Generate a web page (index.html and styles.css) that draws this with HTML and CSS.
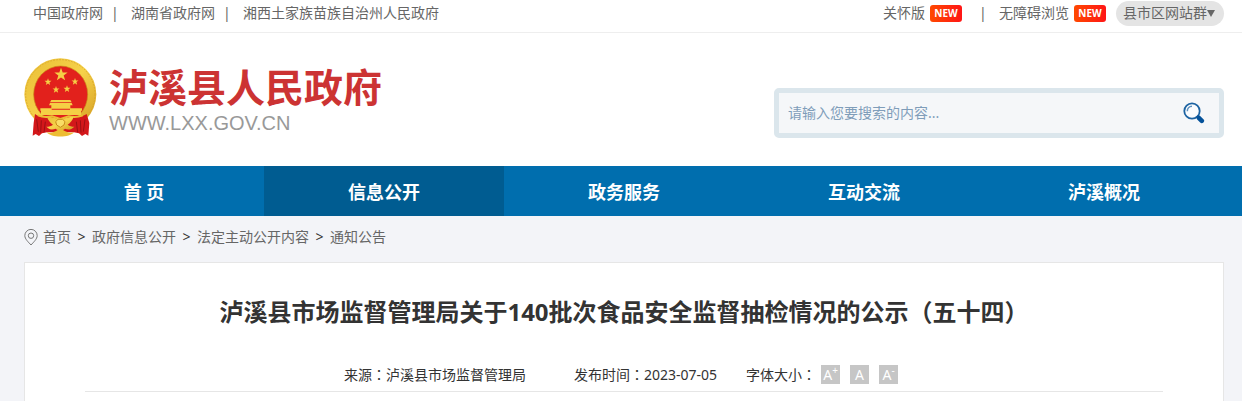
FILE: index.html
```
<!DOCTYPE html>
<html lang="zh-CN">
<head>
    <meta charset="UTF-8">
    <title>泸溪县市场监督管理局关于140批次食品安全监督抽检情况的公示（五十四）</title>
    <link rel="stylesheet" href="styles.css">
</head>
<body>
    <!-- 顶部链接 -->
    <div class="top">
        <div class="wrap top-inner">
            <div class="top-left">
                <a href="#">中国政府网</a>
                <span class="line">|</span>
                <a href="#">湖南省政府网</a>
                <span class="line">|</span>
                <a href="#">湘西土家族苗族自治州人民政府</a>
            </div>
            <div class="top-right">
                <a href="#">关怀版</a>
                <span class="new">NEW</span>
                <span class="line">|</span>
                <a href="#">无障碍浏览</a>
                <span class="new">NEW</span>
                <button type="button" class="sites">县市区网站群<svg width="8" height="7" viewBox="0 0 8 7"><path d="M0 0h8L4 7z" fill="#666"/></svg></button>
            </div>
        </div>
    </div>
    <!-- logo和搜索 -->
    <div class="wrap header">
        <a href="#" class="logo">
            <svg class="emblem" viewBox="28 22 219 237">
                <defs>
                    <linearGradient id="gold" x1="0" y1="0" x2="1" y2="1">
                        <stop offset="0" stop-color="#e9bd35"/>
                        <stop offset="0.5" stop-color="#f6d24a"/>
                        <stop offset="1" stop-color="#d29a20"/>
                    </linearGradient>
                    <polygon id="star" points="0,-10 2.4,-3.2 9.5,-3.1 3.8,1.2 5.9,8.1 0,4 -5.9,8.1 -3.8,1.2 -9.5,-3.1 -2.4,-3.2"/>
                </defs>
                <ellipse cx="137" cy="131" rx="108" ry="108" fill="url(#gold)"/>
                <ellipse cx="137" cy="131" rx="104" ry="104" fill="none" stroke="#d29c25" stroke-width="2" stroke-dasharray="5 4"/>
                <ellipse cx="138" cy="131" rx="81" ry="85" fill="#e2211c" stroke="#c98b1a" stroke-width="2"/>
                <g fill="#f5cf45">
                    <use href="#star" transform="translate(139 72) scale(2.1)"/>
                    <use href="#star" transform="translate(100 94) scale(1.1)"/>
                    <use href="#star" transform="translate(181 93) scale(1.1)"/>
                    <use href="#star" transform="translate(124 117) scale(1.1)"/>
                    <use href="#star" transform="translate(157 115) scale(1.1)"/>
                    <path d="M110 148h57l4 7h-65zM106 157h65l3 7h-71zM110 164h57v10h-57zM77 173h34v4h55v-4h36v7h-3v13H79v-13h-2z"/>
                </g>
                <!-- 红绸 -->
                <path d="M61 190c8 7 20 9 39 10h74c19-1 31-3 42-10l8 27-3 38-9-5-10 6-9-8-15-3H97l-15 3-9 8-10-6-9 5 3-38z" fill="#d3171a"/>
                <path d="M66 206l5 37M80 209l-2 37M92 213l-4 32M211 206l-5 37M197 209l2 37M185 213l4 32" stroke="#9c1013" stroke-width="3"/>
                <path d="M70 194c14 6 29 6 42 3l25 8 25-8c13 3 28 3 42-3" fill="none" stroke="#edbd33" stroke-width="6"/>
                <path d="M97 198c14 0 26 6 40 6s26-6 40-6c-3 10-10 18-18 24 6 4 12 6 20 6-10 10-20 10-28 6-6 7-22 7-28 0-8 4-18 4-28-6 8 0 14-2 20-6-8-6-15-14-18-24z" fill="url(#gold)"/>
                <path d="M123 213l7-7h14l7 7-3 10-11 7-11-7z" fill="#f9dd65" stroke="#c98b1a" stroke-width="3"/>
                <path d="M96 245c14 4 25-2 33-7h16c8 5 19 11 33 7-12 17-70 17-82 0z" fill="#edbd33"/>
            </svg>
            <span class="logo-text">
                <span class="logo-name">泸溪县人民政府</span>
                <span class="logo-url">WWW.LXX.GOV.CN</span>
            </span>
        </a>
        <form class="search">
            <input type="text" aria-label="搜索" placeholder="请输入您要搜索的内容...">
            <button type="button" aria-label="搜索">
                <svg width="22" height="22" viewBox="0 0 22 22">
                    <circle cx="9" cy="9" r="7.7" fill="#fafcfe" stroke="#1c63a2" stroke-width="1.8"/>
                    <path d="M4.3 9.3A5 5 0 0 1 9 4.2" fill="none" stroke="#5d91bf" stroke-width="1.5"/>
                    <path d="M14 14l1.8 1.8" stroke="#1c63a2" stroke-width="2"/>
                    <path d="M15.8 15.8l3 3" stroke="#04529a" stroke-width="4.6" stroke-linecap="round"/>
                </svg>
            </button>
        </form>
    </div>
    <!-- 导航 -->
    <nav class="nav">
        <div class="wrap nav-inner">
            <a href="#">首 页</a>
            <a href="#" class="on">信息公开</a>
            <a href="#">政务服务</a>
            <a href="#">互动交流</a>
            <a href="#">泸溪概况</a>
        </div>
    </nav>
    <!-- 正文 -->
    <div class="wrap main">
        <div class="position">
            <svg width="14" height="17" viewBox="0 0 14 17" fill="none" stroke="#777">
                <path d="M7 16C4.5 13.2.8 10 .8 6.6a6.2 6.2 0 0 1 12.4 0C13.2 10 9.5 13.2 7 16z"/>
                <circle cx="7" cy="6.7" r="2.7"/>
            </svg>
            <a href="#">首页</a>
            <span>&gt;</span>
            <a href="#">政府信息公开</a>
            <span>&gt;</span>
            <a href="#">法定主动公开内容</a>
            <span>&gt;</span>
            <a href="#">通知公告</a>
        </div>
        <div class="article">
            <h1>泸溪县市场监督管理局关于140批次食品安全监督抽检情况的公示<span class="mark" lang="zh-TW">（</span>五十四<span class="mark" lang="zh-TW">）</span></h1>
            <div class="info">
                <span class="source">来源<span class="mark" lang="zh-TW">：</span>泸溪县市场监督管理局</span>
                <span class="date">发布时间<span class="mark" lang="zh-TW">：</span>2023-07-05</span>
                <span>字体大小<span class="mark" lang="zh-TW">：</span></span>
                <button type="button">A<sup>+</sup></button>
                <button type="button">A</button>
                <button type="button">A<sup>-</sup></button>
            </div>
        </div>
    </div>
</body>
</html>
```
FILE: styles.css
```
* {
    box-sizing: border-box;
    margin: 0;
    padding: 0;
}
body {
    display: flex;
    flex-direction: column;
    min-height: 100vh;
    background: #f3f4f8;
    color: #333;
    font: 14px/20px "Noto Sans", "Noto Sans CJK SC", sans-serif;
}
a {
    color: #666;
    text-decoration: none;
}
button,
input {
    font: inherit;
    border: none;
}
button {
    cursor: pointer;
}
.wrap {
    width: 100%;
    padding: 0 18px 0 24px;
}

/* 顶部 */
.top {
    background: #fff;
    border-bottom: 1px solid #eee;
}
.top-inner {
    display: flex;
    justify-content: space-between;
    height: 32px;
    color: #666;
}
.top-left,
.top-right {
    display: flex;
    align-items: center;
    height: 26px;
}
.top-left {
    padding-left: 9px;
}
.top-left .line {
    width: 28px;
    padding-left: 8px;
}
.top-right .line {
    width: 37px;
    padding-left: 17px;
}
.new {
    width: 32px;
    height: 17px;
    margin-left: 5px;
    border-radius: 3px;
    background: linear-gradient(to right, #ff4800, #ff1616);
    color: #fff;
    font: bold 10px/17px "Open Sans", sans-serif;
    text-align: center;
}
.sites {
    display: flex;
    align-items: center;
    height: 25px;
    margin-left: 10px;
    padding: 0 9px 0 7px;
    border-radius: 13px;
    background: #e4e4e4;
    color: #666;
}

/* logo 搜索 */
.header {
    display: flex;
    justify-content: space-between;
    align-items: flex-start;
    height: 133px;
    background: #fff;
}
.logo {
    display: flex;
    padding-top: 25px;
}
.emblem {
    width: 73px;
    height: 79px;
}
.logo-text {
    display: flex;
    flex-direction: column;
    padding-left: 12px;
}
.logo-name {
    color: #c33;
    font: bold 39px/54px "Noto Sans CJK SC", sans-serif;
}
.logo-url {
    color: #999;
    font: 20px/22px "Liberation Sans", sans-serif;
}
.search {
    display: flex;
    width: 450px;
    height: 50px;
    margin-top: 55px;
    border: 5px solid #dbe6ec;
    border-radius: 5px;
    background: #f5f7f9;
}
.search input {
    flex: 1;
    padding-left: 9px;
    background: none;
    outline: none;
}
.search input::placeholder {
    color: #7f9db9;
}
.search button {
    display: flex;
    align-items: center;
    padding: 0 14px;
    background: none;
}

/* 导航 */
.nav {
    background: #006eae;
}
.nav-inner {
    display: flex;
}
.nav a {
    flex: 1;
    height: 50px;
    color: #fff;
    font-size: 18px;
    font-weight: bold;
    line-height: 52px;
    text-align: center;
}
.nav .on {
    background: #005c91;
}

/* 正文 */
.main {
    display: flex;
    flex: 1;
    flex-direction: column;
}
.position {
    display: flex;
    align-items: center;
    height: 46px;
    padding-bottom: 4px;
}
.position svg {
    margin-right: 5px;
}
.position span {
    width: 21px;
    text-align: center;
}
.article {
    flex: 1;
    padding: 30px 60px 0;
    border: 1px solid #e6e6e6;
    border-bottom: none;
    background: #fff;
}
h1 {
    font-size: 24px;
    line-height: 36px;
    text-align: center;
}
.mark {
    font-family: "Noto Sans CJK TC", sans-serif;
}
.info {
    display: flex;
    justify-content: center;
    align-items: center;
    margin-top: 32px;
    padding: 2px 6px 6px 0;
    border-bottom: 1px solid #e6e6e6;
}
.source {
    margin-right: 48px;
}
.date {
    margin-right: 29px;
}
.info button {
    display: flex;
    justify-content: center;
    width: 19px;
    height: 19px;
    margin-left: 10px;
    background: #c6c6c6;
    color: #fff;
    line-height: 19px;
}
.info span + button {
    margin-left: 5px;
}
.info sup {
    font-size: 10px;
    line-height: 10px;
}
```
